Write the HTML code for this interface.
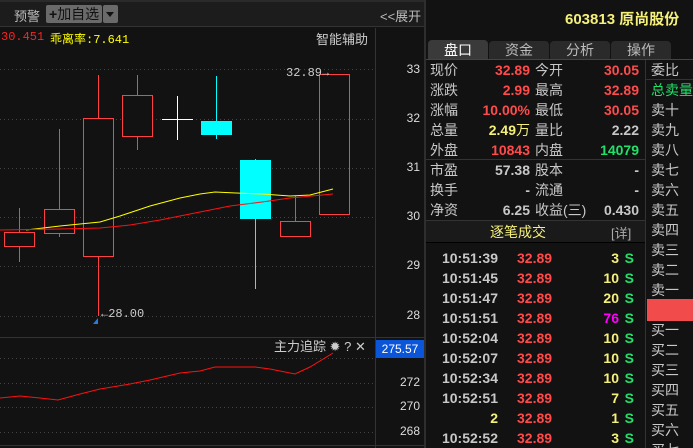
<!DOCTYPE html>
<html><head><meta charset="utf-8"><style>
*{margin:0;padding:0;box-sizing:border-box}
html,body{width:693px;height:448px;overflow:hidden;background:#121212}
body{position:relative;font-family:"Liberation Sans","Noto Sans CJK SC",sans-serif;font-size:13px;color:#c8c8c8}
.a{position:absolute;white-space:nowrap}
.r{color:#ff4b4b}.y{color:#f5f07a}.g{color:#22e06a}.w{color:#c8c8c8}
.mono{font-family:"Liberation Mono","Noto Sans CJK SC",monospace}
.row{position:absolute;height:20px;line-height:20px;font-size:14px;white-space:nowrap}
</style></head><body>
<div class="a" style="left:0;top:0;width:425px;height:27px;background:#1c1c1c;border-bottom:1px solid #333;border-top:2px solid #2a2a2a"></div>
<div class="a" style="left:14px;top:6px;font-size:13px;color:#bbb">预警</div>
<div class="a" style="left:46px;top:5px;width:56px;height:18px;background:#6a6a6a;border-radius:2px;color:#111;font-size:14px;line-height:18px;padding-left:3px"><b>+</b>加自选</div>
<div class="a" style="left:103px;top:5px;width:15px;height:18px;background:#6a6a6a;border-radius:2px"><div style="margin:7px 0 0 3px;width:0;height:0;border-left:4px solid transparent;border-right:4px solid transparent;border-top:5px solid #111"></div></div>
<div class="a" style="left:380px;top:6px;color:#bbb;font-size:13px">&lt;&lt;展开</div>
<div class="a" style="left:424px;top:0;width:2px;height:448px;background:#2e2e2e"></div>
<div class="a mono" style="left:1px;top:30px;color:#ff2020;font-size:12px">30.451</div>
<div class="a mono" style="left:50px;top:30px;color:#ffff00;font-size:12px">乖离率:7.641</div>
<div class="a" style="left:316px;top:29px;color:#ccc;font-size:13px">智能辅助</div>
<svg class="a" style="left:0;top:0" width="425" height="448">
<g stroke="#444" stroke-dasharray="1,3" stroke-width="1">
<line x1="0" y1="69.5" x2="375" y2="69.5"/><line x1="0" y1="119.5" x2="375" y2="119.5"/><line x1="0" y1="168.5" x2="375" y2="168.5"/><line x1="0" y1="217.5" x2="375" y2="217.5"/><line x1="0" y1="266.5" x2="375" y2="266.5"/><line x1="0" y1="316.5" x2="375" y2="316.5"/>
<line x1="0" y1="358.5" x2="375" y2="358.5"/><line x1="0" y1="383.5" x2="375" y2="383.5"/><line x1="0" y1="407.5" x2="375" y2="407.5"/><line x1="0" y1="432.5" x2="375" y2="432.5"/>
</g>
<line x1="375.5" y1="28" x2="375.5" y2="448" stroke="#333"/>
<line x1="0" y1="337.5" x2="425" y2="337.5" stroke="#333"/>
<line x1="0" y1="445.5" x2="425" y2="445.5" stroke="#333"/>
<g fill="none" stroke="#ff4040" stroke-width="1">
<line x1="19.5" y1="208" x2="19.5" y2="262"/><rect x="4.5" y="232.5" width="30" height="14" fill="#121212"/>
<line x1="59.5" y1="129" x2="59.5" y2="237"/><rect x="44.5" y="209.5" width="30" height="24" fill="#121212"/>
<line x1="98.5" y1="75" x2="98.5" y2="316"/><rect x="83.5" y="118.5" width="30" height="138" fill="#121212"/>
<line x1="137.5" y1="75" x2="137.5" y2="150"/><rect x="122.5" y="95.5" width="30" height="41" fill="#121212"/>
<line x1="295.5" y1="196" x2="295.5" y2="221"/><rect x="280.5" y="221.5" width="30" height="15"/>
<rect x="319.5" y="74.5" width="30" height="140"/>
</g>
<g stroke="#fff"><line x1="162" y1="119.5" x2="193" y2="119.5"/><line x1="177.5" y1="96" x2="177.5" y2="140"/></g>
<line x1="216.5" y1="76" x2="216.5" y2="139" stroke="#00ffff"/><rect x="201" y="121" width="31" height="14" fill="#00ffff"/>
<line x1="255.5" y1="159" x2="255.5" y2="289" stroke="#00ffff"/><rect x="240" y="160" width="31" height="59" fill="#00ffff"/>
<polyline fill="none" stroke="#ffff00" points="26,230 60,226 100,222 120,216 150,206 180,198 200,194 215,192 236,193 262,194 290,196 310,195 333,189"/>
<polyline fill="none" stroke="#ff1010" points="0,230 60,229 100,228 130,225 160,220 200,212 230,206 262,202 290,198 333,194"/>
<polygon points="98,318 98,324 93,324" fill="#2a7ae0"/>
<polyline fill="none" stroke="#ff1010" points="0,398 20,396 40,398 58,400 80,394 100,389 130,384 150,380 180,373 200,371 215,367 235,367 255,367 270,369 295,374 310,367 333,353"/>
</svg>
<div class="a mono" style="left:286px;top:66px;font-size:12px;color:#ccc">32.89→</div>
<div class="a mono" style="left:101px;top:307px;font-size:12px;color:#ccc">←28.00</div>
<div class="a" style="left:274px;top:336px;font-size:13px;color:#ccc">主力追踪 <span style="font-size:13px">✹</span> ? ✕</div>
<div class="a" style="left:376px;top:62px;width:44px;text-align:right;font-size:12px;color:#ddd">33</div>
<div class="a" style="left:376px;top:111px;width:44px;text-align:right;font-size:12px;color:#ddd">32</div>
<div class="a" style="left:376px;top:160px;width:44px;text-align:right;font-size:12px;color:#ddd">31</div>
<div class="a" style="left:376px;top:209px;width:44px;text-align:right;font-size:12px;color:#ddd">30</div>
<div class="a" style="left:376px;top:258px;width:44px;text-align:right;font-size:12px;color:#ddd">29</div>
<div class="a" style="left:376px;top:308px;width:44px;text-align:right;font-size:12px;color:#ddd">28</div>
<div class="a" style="left:376px;top:375px;width:44px;text-align:right;font-size:12px;color:#ddd">272</div>
<div class="a" style="left:376px;top:399px;width:44px;text-align:right;font-size:12px;color:#ddd">270</div>
<div class="a" style="left:376px;top:424px;width:44px;text-align:right;font-size:12px;color:#ddd">268</div>
<div class="a" style="left:376px;top:340px;width:48px;height:18px;background:#0a55d8;color:#fff;font-size:12px;line-height:18px;text-align:center">275.57</div>
<div class="a" style="left:565px;top:8px;font-size:15px;font-weight:bold;color:#f5f07a">603813 原尚股份</div>
<div class="a" style="left:428px;top:40px;width:60px;height:20px;background:#3a3a3a;border-radius:4px 4px 0 0;color:#fff;font-size:14px;text-align:center;line-height:20px">盘口</div>
<div class="a" style="left:489px;top:41px;width:60px;height:18px;background:#2a2a2a;border-radius:4px 4px 0 0;color:#bbb;font-size:14px;text-align:center;line-height:18px">资金</div>
<div class="a" style="left:550px;top:41px;width:60px;height:18px;background:#2a2a2a;border-radius:4px 4px 0 0;color:#bbb;font-size:14px;text-align:center;line-height:18px">分析</div>
<div class="a" style="left:611px;top:41px;width:60px;height:18px;background:#2a2a2a;border-radius:4px 4px 0 0;color:#bbb;font-size:14px;text-align:center;line-height:18px">操作</div>
<div class="a" style="left:426px;top:59px;width:267px;height:1px;background:#444"></div>
<div class="a" style="left:645px;top:60px;width:1px;height:388px;background:#333"></div>
<div class="a" style="left:426px;top:159px;width:219px;height:1px;background:#333"></div>
<div class="a" style="left:426px;top:220px;width:219px;height:1px;background:#333"></div>
<div class="a" style="left:426px;top:221px;width:219px;height:22px;background:#1a1a1a;border-bottom:1px solid #000"></div>
<div class="a" style="left:646px;top:79px;width:47px;height:1px;background:#333"></div>
<div style="position:absolute;left:430px;top:60px;width:215px;height:160px;font-weight:bold">
<div class="row" style="top:0;left:0;font-weight:normal">现价</div><div class="row r" style="top:0;right:115px">32.89</div><div class="row" style="top:0;left:105px;font-weight:normal">今开</div><div class="row r" style="top:0;right:6px">30.05</div>
<div class="row" style="top:20px;left:0;font-weight:normal">涨跌</div><div class="row r" style="top:20px;right:115px">2.99</div><div class="row" style="top:20px;left:105px;font-weight:normal">最高</div><div class="row r" style="top:20px;right:6px">32.89</div>
<div class="row" style="top:40px;left:0;font-weight:normal">涨幅</div><div class="row r" style="top:40px;right:115px">10.00%</div><div class="row" style="top:40px;left:105px;font-weight:normal">最低</div><div class="row r" style="top:40px;right:6px">30.05</div>
<div class="row" style="top:60px;left:0;font-weight:normal">总量</div><div class="row y" style="top:60px;right:115px">2.49<span style="font-weight:normal">万</span></div><div class="row" style="top:60px;left:105px;font-weight:normal">量比</div><div class="row w" style="top:60px;right:6px">2.22</div>
<div class="row" style="top:80px;left:0;font-weight:normal">外盘</div><div class="row r" style="top:80px;right:115px">10843</div><div class="row" style="top:80px;left:105px;font-weight:normal">内盘</div><div class="row g" style="top:80px;right:6px">14079</div>
<div class="row" style="top:100px;left:0;font-weight:normal">市盈</div><div class="row w" style="top:100px;right:115px">57.38</div><div class="row" style="top:100px;left:105px;font-weight:normal">股本</div><div class="row w" style="top:100px;right:6px">-</div>
<div class="row" style="top:120px;left:0;font-weight:normal">换手</div><div class="row w" style="top:120px;right:115px">-</div><div class="row" style="top:120px;left:105px;font-weight:normal">流通</div><div class="row w" style="top:120px;right:6px">-</div>
<div class="row" style="top:140px;left:0;font-weight:normal">净资</div><div class="row w" style="top:140px;right:115px">6.25</div><div class="row" style="top:140px;left:105px;font-weight:normal">收益(三)</div><div class="row w" style="top:140px;right:6px">0.430</div>
</div>
<div class="a y" style="left:490px;top:222px;font-size:14px">逐笔成交</div>
<div class="a" style="left:611px;top:223px;font-size:13px;color:#aaa">[详]</div>
<div style="position:absolute;left:426px;top:248px;width:219px;height:200px;font-weight:bold">
<div class="row w" style="top:0;right:147px">10:51:39</div><div class="row r" style="top:0;left:91px">32.89</div><div class="row y" style="top:0;right:26px">3</div><div class="row g" style="top:0;right:11px">S</div>
<div class="row w" style="top:20px;right:147px">10:51:45</div><div class="row r" style="top:20px;left:91px">32.89</div><div class="row y" style="top:20px;right:26px">10</div><div class="row g" style="top:20px;right:11px">S</div>
<div class="row w" style="top:40px;right:147px">10:51:47</div><div class="row r" style="top:40px;left:91px">32.89</div><div class="row y" style="top:40px;right:26px">20</div><div class="row g" style="top:40px;right:11px">S</div>
<div class="row w" style="top:60px;right:147px">10:51:51</div><div class="row r" style="top:60px;left:91px">32.89</div><div class="row" style="top:60px;right:26px;color:#ff00ff">76</div><div class="row g" style="top:60px;right:11px">S</div>
<div class="row w" style="top:80px;right:147px">10:52:04</div><div class="row r" style="top:80px;left:91px">32.89</div><div class="row y" style="top:80px;right:26px">10</div><div class="row g" style="top:80px;right:11px">S</div>
<div class="row w" style="top:100px;right:147px">10:52:07</div><div class="row r" style="top:100px;left:91px">32.89</div><div class="row y" style="top:100px;right:26px">10</div><div class="row g" style="top:100px;right:11px">S</div>
<div class="row w" style="top:120px;right:147px">10:52:34</div><div class="row r" style="top:120px;left:91px">32.89</div><div class="row y" style="top:120px;right:26px">10</div><div class="row g" style="top:120px;right:11px">S</div>
<div class="row w" style="top:140px;right:147px">10:52:51</div><div class="row r" style="top:140px;left:91px">32.89</div><div class="row y" style="top:140px;right:26px">7</div><div class="row g" style="top:140px;right:11px">S</div>
<div class="row y" style="top:160px;right:147px">2</div><div class="row r" style="top:160px;left:91px">32.89</div><div class="row y" style="top:160px;right:26px">1</div><div class="row g" style="top:160px;right:11px">S</div>
<div class="row w" style="top:180px;right:147px">10:52:52</div><div class="row r" style="top:180px;left:91px">32.89</div><div class="row y" style="top:180px;right:26px">3</div><div class="row g" style="top:180px;right:11px">S</div>
</div>
<div style="position:absolute;left:651px;top:60px;width:60px;height:388px">
<div class="row" style="top:0">委比</div>
<div class="row g" style="top:20px">总卖量</div>
<div class="row" style="top:40px">卖十</div><div class="row" style="top:60px">卖九</div><div class="row" style="top:80px">卖八</div><div class="row" style="top:100px">卖七</div><div class="row" style="top:120px">卖六</div><div class="row" style="top:140px">卖五</div><div class="row" style="top:160px">卖四</div><div class="row" style="top:180px">卖三</div><div class="row" style="top:200px">卖二</div><div class="row" style="top:220px">卖一</div>
<div class="row" style="top:260px">买一</div><div class="row" style="top:280px">买二</div><div class="row" style="top:300px">买三</div><div class="row" style="top:320px">买四</div><div class="row" style="top:340px">买五</div><div class="row" style="top:360px">买六</div><div class="row" style="top:380px">买七</div>
</div>
<div class="a" style="left:647px;top:299px;width:46px;height:22px;background:#f24b4b"></div>
</body></html>
